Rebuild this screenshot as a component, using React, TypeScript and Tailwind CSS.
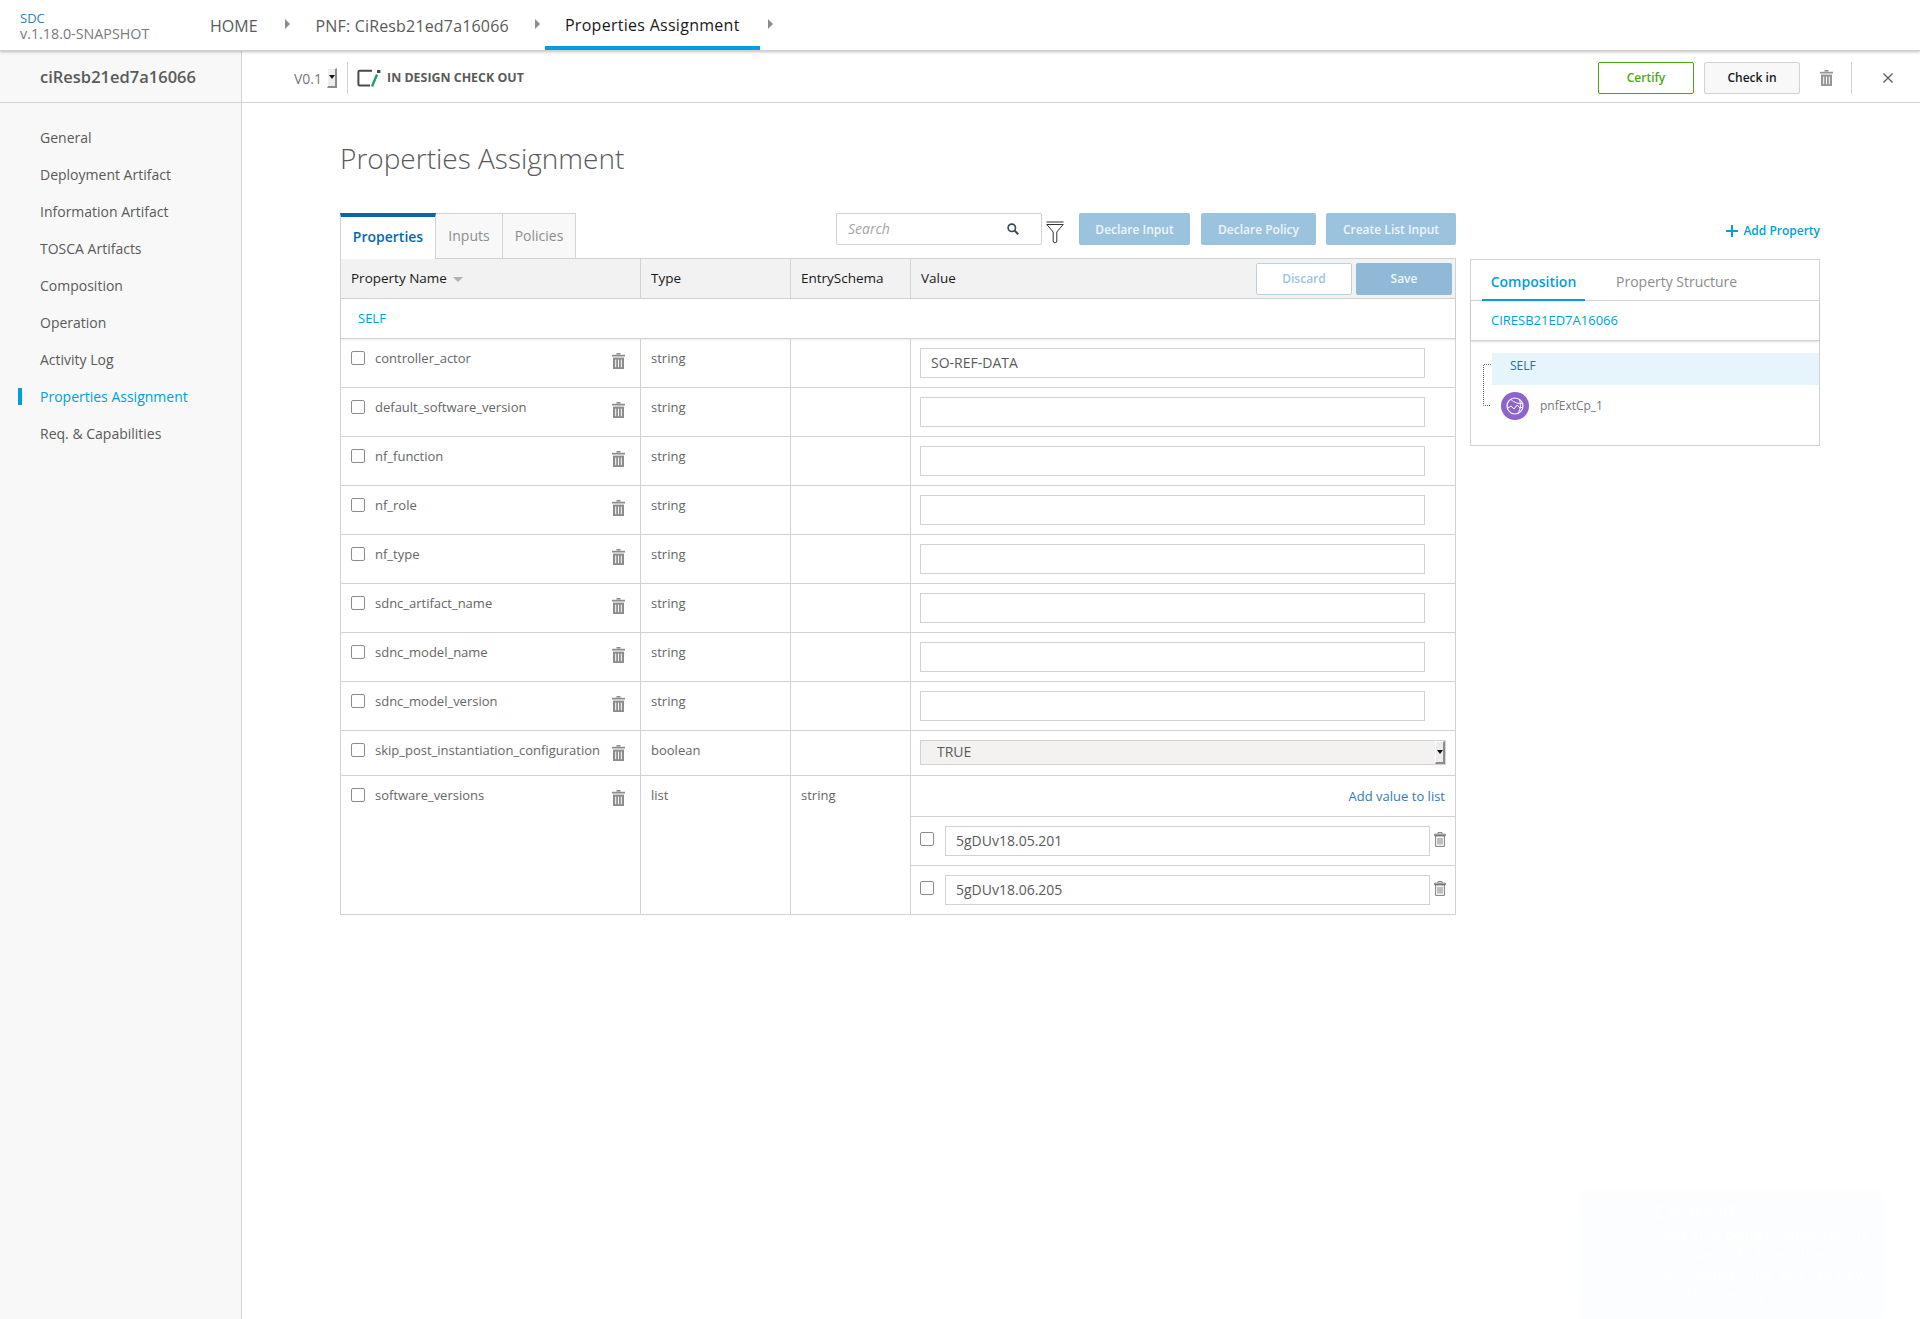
import React from "react";

const Trash = ({ className = "" }: { className?: string }) => (
  <svg viewBox="0 0 13 16" className={className} fill="currentColor">
    <rect x="4.5" y="0" width="4" height="1.6" />
    <rect x="0" y="1.8" width="13" height="1.7" />
    <path d="M1 4.6h11V16H1z" />
    <g fill="#ffffff">
      <rect x="3.2" y="6.6" width="1" height="7.6" />
      <rect x="6" y="6.6" width="1" height="7.6" />
      <rect x="8.8" y="6.6" width="1" height="7.6" />
    </g>
  </svg>
);

const TrashOutline = ({ className = "" }: { className?: string }) => (
  <svg viewBox="0 0 12 15" className={className} fill="none" stroke="currentColor" strokeWidth="0.8">
    <path d="M4 1.8V.6h4v1.2" />
    <path d="M.6 2.2h10.8v1.5H.6z" />
    <path d="M1.6 3.8h8.8v10.6H1.6z" />
    <path d="M4 5.8v6.8M6 5.8v6.8M8 5.8v6.8" />
  </svg>
);

const Check = () => <span className="block w-[14px] h-[14px] shrink-0 rounded-[2px] border border-[#8c8c8c] bg-white" />;

const Caret = () => (
  <svg viewBox="0 0 5 10" className="w-[5px] h-[10px] text-[#8c8c8c]" fill="currentColor">
    <path d="M0 0l5 5-5 5z" />
  </svg>
);

const Stepper = ({ className = "" }: { className?: string }) => (
  <span className={`flex flex-col items-center justify-center bg-[#ededed] border-r-2 border-b-2 border-[#8c8c8c] border-t border-l border-t-white border-l-white ${className}`}>
    <svg viewBox="0 0 6 4" className="w-[6px] h-[4px]" fill="#111">
      <path d="M0 0h6L3 4z" />
    </svg>
  </span>
);

const rows: [string][] = [
  ["controller_actor"],
  ["default_software_version"],
  ["nf_function"],
  ["nf_role"],
  ["nf_type"],
  ["sdnc_artifact_name"],
  ["sdnc_model_name"],
  ["sdnc_model_version"],
];

const nav = [
  "General",
  "Deployment Artifact",
  "Information Artifact",
  "TOSCA Artifacts",
  "Composition",
  "Operation",
  "Activity Log",
  "Properties Assignment",
  "Req. & Capabilities",
];

const NameCell = ({ name }: { name: string }) => (
  <div className="w-[300px] shrink-0 border-r border-[#d2d2d2] flex items-start pl-[10px] h-full">
    <span className="mt-[12px]"><Check /></span>
    <span className="ml-[10px] mt-[10px] leading-[18px] whitespace-nowrap">{name}</span>
    <span className="flex-1" />
    <Trash className="w-[13px] h-[16px] mt-[14px] mr-[15px] text-[#8c8c8c] shrink-0" />
  </div>
);

export default function App() {
  return (
    <div className="relative w-full h-screen overflow-hidden bg-white font-['Open_Sans',sans-serif] text-[13px] text-[#666666]">
      {/* top navigation */}
      <header className="relative z-10 h-[51px] bg-white border-b border-[#cfcfcf] shadow-[0_1px_3px_rgba(0,0,0,0.25)] flex items-stretch pl-[20px]">
        <div className="w-[190px] shrink-0 pt-[10px]">
          <div className="text-[13px] leading-[16px] text-[#2f7fb8]">SDC</div>
          <div className="text-[14.3px] leading-[16px] text-[#7a7a7a] whitespace-nowrap">v.1.18.0-SNAPSHOT</div>
        </div>
        <nav className="flex items-stretch text-[16px] pt-[1px]">
          <div className="flex items-center text-[#5a5a5a]">HOME</div>
          <div className="flex items-center ml-[27px] mr-[26px] pb-[4px]"><Caret /></div>
          <div className="flex items-center text-[#5a5a5a] tracking-[0.17px]">PNF: CiResb21ed7a16066</div>
          <div className="flex items-center ml-[26px] mr-[5px] pb-[4px]"><Caret /></div>
          <div className="flex items-center w-[215px] justify-center text-[#191919] font-medium tracking-[0.28px] border-b-4 border-[#009fdb] h-[49px] pt-[3px]">Properties Assignment</div>
          <div className="flex items-center ml-[8px] pb-[4px]"><Caret /></div>
        </nav>
      </header>

      <div className="flex h-[1268px]">
        {/* sidebar */}
        <aside className="w-[242px] shrink-0 bg-[#f8f8f8] border-r border-[#d2d2d2]">
          <div className="h-[52px] border-b border-[#d2d2d2] flex items-center pl-[40px] pt-[2px] text-[16.5px] font-semibold text-[#5a5a5a]">ciResb21ed7a16066</div>
          <ul className="pt-[16px] text-[14px]">
            {nav.map((n) => {
              const active = n === "Properties Assignment";
              return (
                <li key={n} className={`relative h-[37px] flex items-center pl-[40px] ${active ? "text-[#009fdb]" : "text-[#5a5a5a]"}`}>
                  {active && <span className="absolute left-[18px] top-[10px] w-[4px] h-[17px] bg-[#009fdb]" />}
                  {n}
                </li>
              );
            })}
          </ul>
        </aside>

        <main className="flex-1 min-w-0">
          {/* toolbar */}
          <div className="h-[52px] border-b border-[#d2d2d2] flex items-center pl-[52px] pr-[26px] pt-[2px]">
            <span className="text-[14px] text-[#777777] mt-[1px]">V0.1</span>
            <Stepper className="w-[10px] h-[20px] ml-[5px]" />
            <span className="w-px h-[32px] bg-[#d2d2d2] ml-[10px]" />
            <svg viewBox="0 0 26 18" className="w-[26px] h-[18px] ml-[9px]" fill="none">
              <path d="M15 1.8H2.6a1.2 1.2 0 0 0-1.2 1.2v12.2a1.2 1.2 0 0 0 1.2 1.2H13" stroke="#4a4a4a" strokeWidth="2" />
              <path d="M20 5.5L15 17.5" stroke="#1e9e6a" strokeWidth="2.4" />
              <rect x="20" y="1" width="3.4" height="3" fill="#4a4a4a" />
            </svg>
            <span className="ml-[4px] pt-[2px] text-[12.4px] font-bold text-[#5a5a5a] whitespace-nowrap">IN DESIGN CHECK OUT</span>
            <span className="flex-1" />
            <button className="w-[96px] h-[32px] pt-[1px] rounded-[2px] border border-[#4ca90c] bg-white text-[#4ca90c] text-[12px] font-semibold">Certify</button>
            <button className="w-[96px] h-[32px] pt-[1px] ml-[10px] rounded-[2px] border border-[#d2d2d2] bg-[#f8f8f8] text-[#191919] text-[12px] font-semibold">Check in</button>
            <Trash className="w-[13px] h-[16px] ml-[20px] text-[#959595]" />
            <span className="w-px h-[32px] bg-[#d2d2d2] ml-[18px]" />
            <svg viewBox="0 0 10 10" className="w-[10px] h-[10px] ml-[31px] mr-[1px] text-[#5a5a5a]" stroke="currentColor" strokeWidth="1.3">
              <path d="M.5.5l9 9M9.5.5l-9 9" />
            </svg>
          </div>

          <div className="pl-[98px] pt-[35px]">
            <h1 className="h-[40px] leading-[40px] text-[28px] font-light text-[#5a5a5a]">Properties Assignment</h1>

            <div className="flex mt-[35px]">
              {/* left column */}
              <div className="w-[1116px] shrink-0">
                <div className="h-[45px] flex items-start">
                  <div className="w-[96px] h-[46px] relative z-[1] border-l border-r border-[#d2d2d2] border-t-4 border-t-[#0568ae] bg-white flex items-center justify-center text-[14px] font-semibold text-[#0568ae] pb-[4px]">Properties</div>
                  <div className="w-[67px] h-[45px] border-r border-t border-[#d2d2d2] bg-[#f8f8f8] flex items-center justify-center text-[14px] text-[#8c8c8c] pb-[1px]">Inputs</div>
                  <div className="w-[73px] h-[45px] border-r border-t border-[#d2d2d2] bg-[#f8f8f8] flex items-center justify-center text-[14px] text-[#8c8c8c] pb-[1px]">Policies</div>
                  <div className="ml-[260px] w-[206px] h-[32px] rounded-[2px] border border-[#d2d2d2] bg-white flex items-center pl-[11px] pr-[22px]">
                    <span className="italic text-[14px] text-[#a5a5a5] pb-[2px]">Search</span>
                    <span className="flex-1" />
                    <svg viewBox="0 0 12 12" className="w-[12px] h-[12px]" fill="none" stroke="#3a4650" strokeWidth="1.6">
                      <circle cx="4.8" cy="4.8" r="3.7" />
                      <path d="M7.6 7.6l3.6 3.6" strokeWidth="2" />
                    </svg>
                  </div>
                  <svg viewBox="0 0 18 22" className="w-[18px] h-[22px] ml-[4px] mt-[8px]" fill="none" stroke="#333" strokeWidth="1">
                    <path d="M.5 1h17" />
                    <path d="M.8 3.5h16.4L10.8 11v9a1.8 1.8 0 0 1-3.6 0v-9z" />
                  </svg>
                  <button className="ml-[15px] w-[111px] h-[32px] pt-[1px] rounded-[2px] bg-[#9cc3de] text-[#eef5fa] text-[12px] font-semibold">Declare Input</button>
                  <button className="ml-[11px] w-[115px] h-[32px] pt-[1px] rounded-[2px] bg-[#9cc3de] text-[#eef5fa] text-[12px] font-semibold">Declare Policy</button>
                  <button className="ml-[10px] w-[130px] h-[32px] pt-[1px] rounded-[2px] bg-[#9cc3de] text-[#eef5fa] text-[12px] font-semibold">Create List Input</button>
                </div>

                <div className="border border-[#d2d2d2]">
                  {/* table header */}
                  <div className="h-[40px] flex bg-[#f2f2f2] border-b border-[#d2d2d2] text-[#191919] text-[13.5px]">
                    <div className="w-[300px] shrink-0 border-r border-[#d2d2d2] flex items-center pl-[10px]">
                      Property Name
                      <svg viewBox="0 0 10 5" className="w-[10px] h-[5px] ml-[6px] mt-[2px]" fill="#b0b0b0"><path d="M0 0h10L5 5z" /></svg>
                    </div>
                    <div className="w-[150px] shrink-0 border-r border-[#d2d2d2] flex items-center pl-[10px]">Type</div>
                    <div className="w-[120px] shrink-0 border-r border-[#d2d2d2] flex items-center pl-[10px]">EntrySchema</div>
                    <div className="flex-1 flex items-center pl-[10px] pr-[3px]">
                      <span>Value</span>
                      <span className="flex-1" />
                      <button className="w-[96px] h-[32px] rounded-[2px] border border-[#b5d3e8] bg-white text-[#9cc3de] text-[12px] font-semibold">Discard</button>
                      <button className="w-[96px] h-[32px] ml-[4px] rounded-[2px] bg-[#8fb9d6] text-[#eef5fa] text-[12px] font-semibold">Save</button>
                    </div>
                  </div>
                  {/* SELF */}
                  <div className="h-[40px] flex items-center pl-[17px] border-b border-[#d2d2d2] shadow-[0_1px_2px_rgba(0,0,0,0.08)] text-[#009fdb] text-[13px]">SELF</div>

                  {rows.map(([name], i) => (
                    <div key={name} className="h-[49px] flex border-b border-[#d2d2d2]">
                      <NameCell name={name} />
                      <div className="w-[150px] shrink-0 border-r border-[#d2d2d2] pl-[10px] pt-[10px] leading-[18px]">string</div>
                      <div className="w-[120px] shrink-0 border-r border-[#d2d2d2]" />
                      <div className="flex-1 pl-[9px] pt-[9px]">
                        <div className="w-[505px] h-[30px] border border-[#d2d2d2] bg-white flex items-center pl-[10px] pb-[1px] text-[14px] text-[#5a5a5a]">
                          {i === 0 ? "SO-REF-DATA" : ""}
                        </div>
                      </div>
                    </div>
                  ))}

                  {/* boolean row */}
                  <div className="h-[45px] flex border-b border-[#d2d2d2]">
                    <NameCell name="skip_post_instantiation_configuration" />
                    <div className="w-[150px] shrink-0 border-r border-[#d2d2d2] pl-[10px] pt-[10px] leading-[18px]">boolean</div>
                    <div className="w-[120px] shrink-0 border-r border-[#d2d2d2]" />
                    <div className="flex-1 pl-[9px] pt-[9px]">
                      <div className="w-[526px] h-[25px] border border-[#d2d2d2] bg-[#f3f2f1] flex items-center pl-[16px] text-[14px] text-[#5a5a5a]">
                        <span className="pb-[2px]">TRUE</span>
                        <span className="flex-1" />
                        <Stepper className="w-[10px] h-[23px]" />
                      </div>
                    </div>
                  </div>

                  {/* list row */}
                  <div className="h-[138px] flex">
                    <NameCell name="software_versions" />
                    <div className="w-[150px] shrink-0 border-r border-[#d2d2d2] pl-[10px] pt-[10px] leading-[18px]">list</div>
                    <div className="w-[120px] shrink-0 border-r border-[#d2d2d2] pl-[10px] pt-[10px] leading-[18px]">string</div>
                    <div className="flex-1 flex flex-col">
                      <div className="h-[41px] border-b border-[#d2d2d2] flex items-center justify-end pr-[10px] pt-[1px] text-[#337ab7] text-[13px]">Add value to list</div>
                      {["5gDUv18.05.201", "5gDUv18.06.205"].map((v, i) => (
                        <div key={v} className={`flex items-start pl-[9px] ${i === 0 ? "h-[49px] border-b border-[#d2d2d2]" : "h-[48px]"}`}>
                          <span className="mt-[15px]"><Check /></span>
                          <div className="ml-[11px] mt-[9px] w-[485px] h-[30px] border border-[#d2d2d2] bg-white flex items-center pl-[10px] pb-[1px] text-[14px] text-[#5a5a5a]">{v}</div>
                          <TrashOutline className="w-[12px] h-[15px] ml-[4px] mt-[15px] text-[#5a5a5a]" />
                        </div>
                      ))}
                    </div>
                  </div>
                </div>
              </div>

              {/* right column */}
              <div className="w-[350px] ml-[14px] shrink-0">
                <div className="h-[46px] flex items-start justify-end pt-[9px]">
                  <span className="flex items-center text-[#009fdb] text-[12px] font-semibold">
                    <svg viewBox="0 0 12 12" className="w-[12px] h-[12px] mr-[5px]" stroke="currentColor" strokeWidth="2">
                      <path d="M6 0v12M0 6h12" />
                    </svg>
                    Add Property
                  </span>
                </div>
                <div className="h-[187px] border border-[#d2d2d2] bg-white">
                  <div className="h-[41px] border-b border-[#d2d2d2] flex items-end pl-[11px] text-[14px]">
                    <div className="w-[103px] h-[40px] pt-[3px] flex items-center justify-center border-b-2 border-[#009fdb] text-[#009fdb] font-semibold -mb-px">Composition</div>
                    <div className="ml-[31px] h-[40px] pt-[3px] flex items-center text-[#8c8c8c]">Property Structure</div>
                  </div>
                  <div className="h-[40px] flex items-center pl-[20px] border-b border-[#d2d2d2] shadow-[0_1px_2px_rgba(0,0,0,0.12)] text-[#009fdb] text-[13px]">CIRESB21ED7A16066</div>
                  <div className="relative pl-[21px] pt-[12px]">
                    <svg viewBox="0 0 8 42" className="absolute left-[12px] top-[23px] w-[8px] h-[42px]" fill="none" stroke="#666" strokeWidth="1" strokeDasharray="1 1">
                      <path d="M8 .5H.5v41H8" />
                    </svg>
                    <div className="h-[32px] bg-[#e6f5fb] pl-[18px] pt-[3px] text-[12px] leading-[20px] text-[#1f6fa8]">SELF</div>
                    <div className="flex items-center mt-[7px] pl-[9px]">
                      <svg viewBox="0 0 28 28" className="w-[28px] h-[28px]" fill="none">
                        <circle cx="14" cy="14" r="14" fill="#8f63cc" />
                        <circle cx="14" cy="14" r="8" stroke="#fff" strokeWidth="1.2" />
                        <path d="M7 16l3-2 3 3 3-4 3 3 3-1M10 7.5c3 3 8 5 11 3.5M18 7c2 4 2 10-1 14" stroke="#fff" strokeWidth="1" />
                      </svg>
                      <span className="ml-[11px] text-[12px] text-[#777777]">pnfExtCp_1</span>
                    </div>
                  </div>
                </div>
              </div>
            </div>
          </div>
        </main>
      </div>

      {/* fading notification toast */}
      <div className="absolute left-[1582px] top-[1193px] w-[298px] h-[126px] bg-[#fcfdfe] pl-[73px] pt-[6px] text-white shadow-[0_0_8px_rgba(240,245,250,0.4)]">
        <div className="text-[18px] leading-[26px] font-semibold">Create VF</div>
        <div className="text-[14px] leading-[20px] font-semibold whitespace-pre">{"Your VF is being created.<br/>It\ncan take up to 10 minutes.\n<br/> When done, you can view\nit in SDC Catalog"}</div>
      </div>
    </div>
  );
}
